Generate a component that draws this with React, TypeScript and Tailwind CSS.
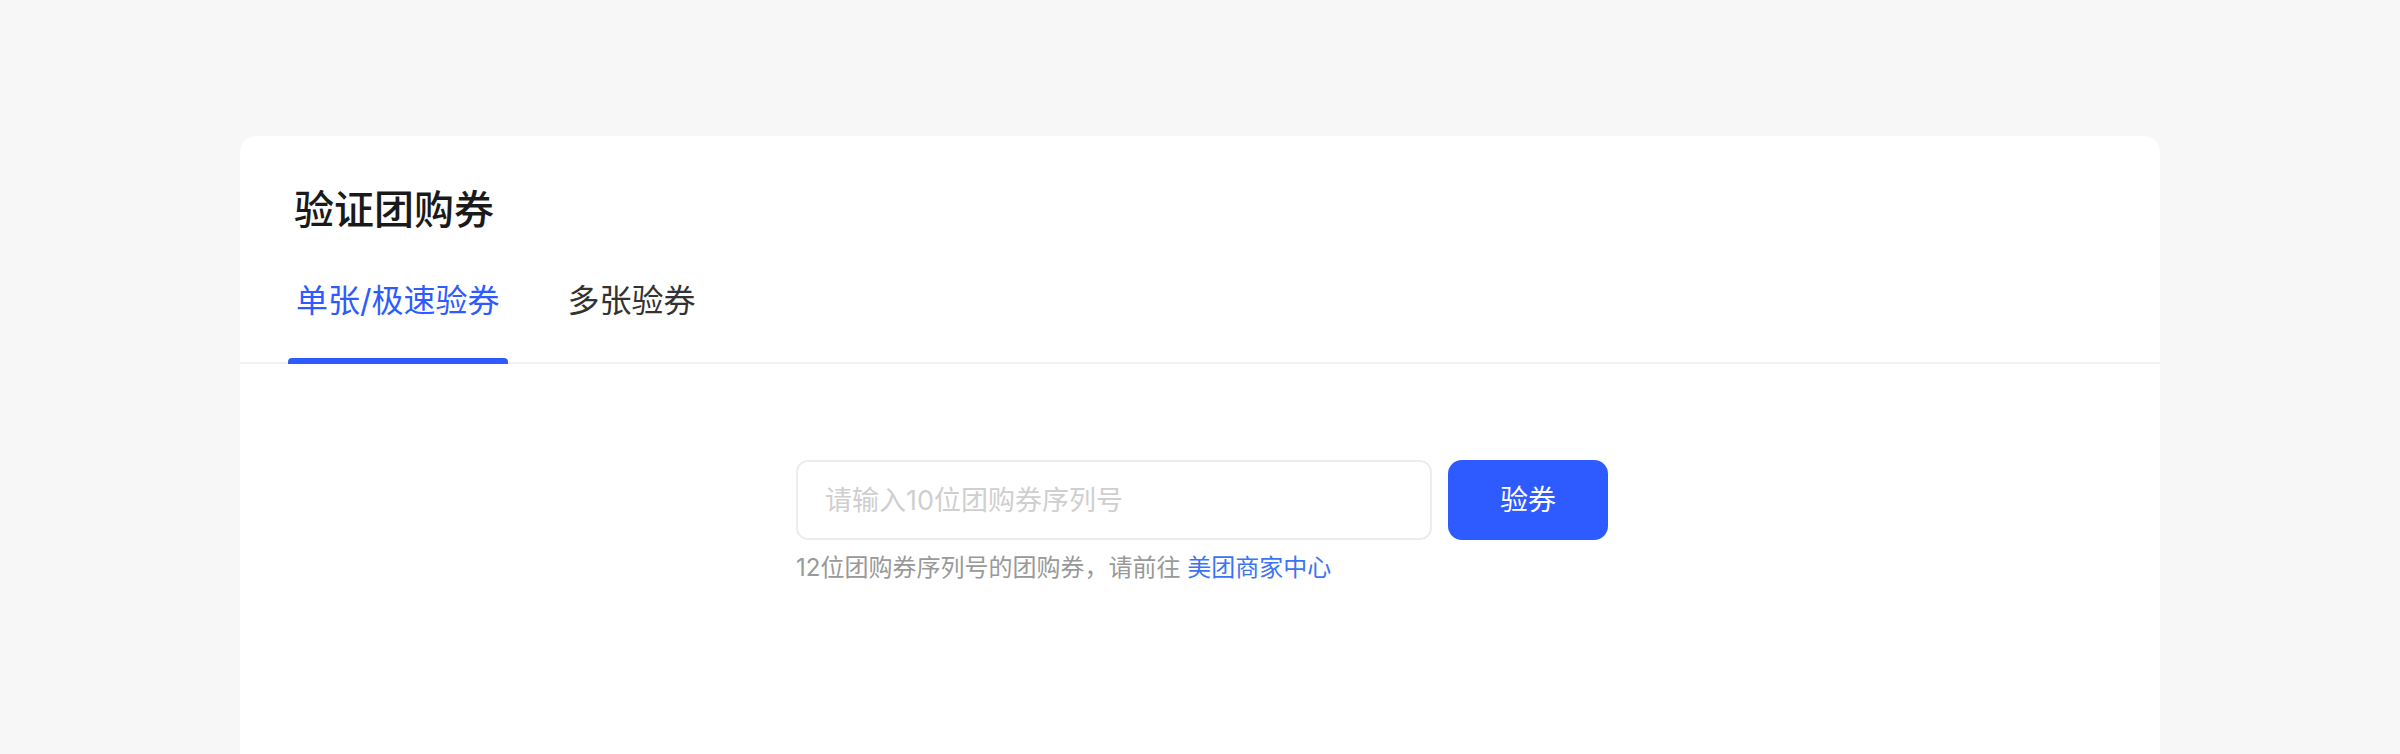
import { useState } from "react"

const tabs = ["单张/极速验券", "多张验券"]

function App() {
  const [active, setActive] = useState(0)
  const [code, setCode] = useState("")

  return (
    <div className="min-h-screen bg-[#f7f7f7] pt-[136px] font-['Inter','Noto_Sans_CJK_SC',sans-serif]">
      <div className="mx-auto w-[1920px] h-[700px] bg-white rounded-[16px]">
        {/* header */}
        <div className="pt-[46px] border-b-2 border-[#f2f2f2]">
          <h1 className="pl-[54px] text-[40px] leading-[56px] font-medium text-[#1a1a1a]">
            验证团购券
          </h1>
          <div className="mt-[41px] pl-[48px] flex gap-[52px]">
            {tabs.map((t, i) => (
              <button
                key={t}
                onClick={() => setActive(i)}
                className={
                  "relative px-[8px] pb-[41px] text-[32px] leading-[44px] -mb-[2px] " +
                  (i === active ? "text-[#2e5bff]" : "text-[#333333]")
                }
              >
                {t}
                {i === active && (
                  <span className="absolute left-0 right-0 bottom-0 h-[6px] rounded-t-[4px] bg-[#2e5bff]" />
                )}
              </button>
            ))}
          </div>
        </div>

        {/* form */}
        <div className="pt-[96px] flex justify-center">
          <div className="pl-[4px]">
            <div className="flex gap-[16px]">
              <input
                value={code}
                onChange={(e) => setCode(e.target.value)}
                placeholder="请输入10位团购券序列号"
                className="w-[636px] h-[80px] rounded-[12px] border-2 border-[#ededed] px-[27px] text-[27px] text-[#333] placeholder:text-[#cfcfcf] outline-none"
              />
              <button className="w-[160px] h-[80px] rounded-[14px] bg-[#2e5bff] text-white text-[28px]">
                验券
              </button>
            </div>
            <p className="mt-[12px] text-[24px] leading-[32px] text-[#999999]">
              12位团购券序列号的团购券，请前往{" "}
              <a className="text-[#3d74f2]">美团商家中心</a>
            </p>
          </div>
        </div>
      </div>
    </div>
  )
}

export default App
